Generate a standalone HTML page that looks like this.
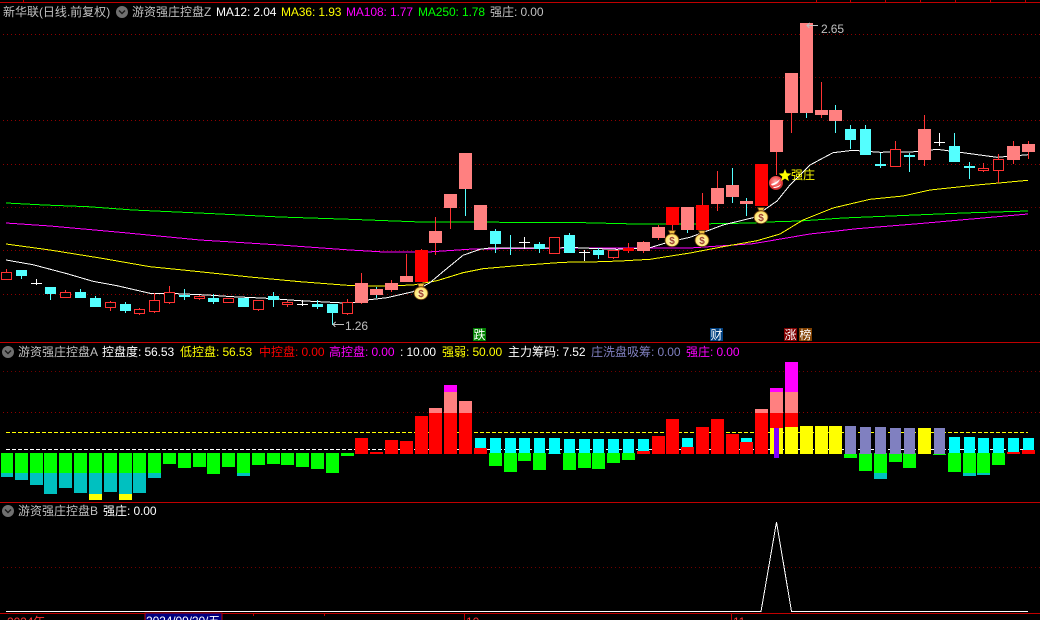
<!DOCTYPE html>
<html lang="zh"><head><meta charset="utf-8"><title>游资强庄控盘</title>
<style>
html,body{margin:0;padding:0;background:#000;width:1040px;height:620px;overflow:hidden}
#r{position:relative;width:1040px;height:620px;overflow:hidden;background:#000}
svg{position:absolute;left:0;top:0}
.t{position:absolute;white-space:nowrap;font:12px/14px "Liberation Sans","WenQuanYi Zen Hei",sans-serif;letter-spacing:-.1px;color:#c0c0c0}
.t b{font:12px/14px "WenQuanYi Zen Hei","Noto Sans CJK SC",sans-serif;letter-spacing:0;display:inline-block;vertical-align:top}
.bd{position:absolute;width:13px;height:13px;color:#fff;text-align:center;font:12px/13px "WenQuanYi Zen Hei","Noto Sans CJK SC",sans-serif}
</style></head><body><div id="r">
<svg width="1040" height="620" viewBox="0 0 1040 620">
<defs>
<radialGradient id="bg" cx=".5" cy=".55" r=".55"><stop offset="0" stop-color="#fff8c8"/><stop offset=".75" stop-color="#ffe878"/><stop offset="1" stop-color="#e8b030"/></radialGradient>
<radialGradient id="ball" cx=".45" cy=".4" r=".65"><stop offset="0" stop-color="#ffa8a8"/><stop offset=".6" stop-color="#f04848"/><stop offset="1" stop-color="#b02020"/></radialGradient>
<g id="bag"><path d="M-3.500-8.500h7l-1.500 3.500h-4z" fill="#f0c040" stroke="#6a3a10" stroke-width=".8"/><ellipse cx="0" cy="1.200" rx="7" ry="6.500" fill="url(#bg)" stroke="#5a3010" stroke-width=".8"/><text x="0" y="4.800" text-anchor="middle" font-family="Liberation Sans,sans-serif" font-weight="bold" font-size="10" fill="#a04030">$</text></g>
</defs>
<!-- grid -->
<g stroke="#900000" stroke-dasharray="1 3" shape-rendering="crispEdges">
<path d="M3 34.500H1040M3 120.500H1040M3 164.500H1040M3 250.500H1040M3 294.500H1040"/>
<path stroke="#700000" d="M3 77.500H1040M3 207.500H1040M3 371.500H1040M3 567.500H1040"/>
<path stroke="#900000" d="M3 412.500H1040"/>
</g>
<!-- frame -->
<g stroke="#c00000" shape-rendering="crispEdges">
<path d="M0 2.500H1040M0 342.500H1040M0 502.500H1040M0 613.500H1040"/>
<path d="M23.500 0V2M816.500 0V2M850.500 0V2M885.500 0V2M920.500 0V2M955.500 0V2M990.500 0V2M1025.500 0V2M253.500 614V616M324.500 614V616M464.500 614V620M731.500 614V620"/>
</g>
<!-- MA lines -->
<g fill="none" stroke-width="1" shape-rendering="crispEdges">
<polyline stroke="#00ff00" points="6,203 44,205 88,206.700 133,210 177,212 220,214 280,217 350,219.300 421,222 576,222.500 636,224 697,224 753,223 767,222 800,221 843,218 903,215.500 963,213 1028,211"/>
<polyline stroke="#ff00ff" points="6,223 50,226 117,232 200,240 280,245 350,250 384,252 428,252 473,249 577,248 690,248 753,243.700 810,234 857,228.700 923,223.300 1028,214"/>
<polyline stroke="#ffff00" points="6,244 50,250 100,258 150,266.700 183,270 250,277 300,281.700 350,285.500 383,286 413,285 437,280.700 463,272.700 483,268.700 517,265.700 563,262.300 590,262 620,261 650,259.300 690,253 723,246.700 757,240.700 780,234 803,220 833,208 870,199.300 903,196 930,190 977,185 1028,180.300"/>
<polyline stroke="#ffffff" points="6,260 33,264.700 67,273.700 93,281.300 117,285.700 150,293.300 177,293.700 207,295 233,296.700 267,298.300 300,300.700 350,303.300 367,300 387,297.700 413,291.700 430,282.700 443,271.700 463,255.300 480,249.300 490,248 577,247.700 590,248.300 617,249.300 650,247.700 670,241.700 690,237.300 723,225 753,217.700 777,201 790,185 810,165 833,152.700 853,150.300 880,152.300 917,151.700 937,149.300 963,152.700 997,157.300 1028,154.700"/>
</g>
<g shape-rendering="crispEdges">
<!-- red wicks -->
<path fill="none" stroke="#ff3232" d="M6.500 269V272M65.500 290V292M65.500 297V298M110.500 301V302M110.500 307V311M139.500 308V309M139.500 314V315M154.500 293V300M154.500 312V313M169.500 286V292M169.500 303V304M199.500 295V296M199.500 299V300M258.500 310V311M287.500 301V302M287.500 305V307M347.500 299V302M347.500 314V315M361.500 273V304M391.500 280V292M406.500 254V282M421.500 249V255M435.500 217V255M450.500 208V229M613.500 258V259M628.500 243V253M643.500 241V253M658.500 225V240M672.500 225V231M702.500 193V205M717.500 171V211M776.500 152V175M791.500 113V133M821.500 82V118M895.500 141V149M924.500 115V166M983.500 163V168M983.500 171V172M998.500 154V159M998.500 171V183M1013.500 141V164M1028.500 141V159"/>
<!-- cyan wicks -->
<path fill="none" stroke="#54ffff" d="M21.500 276V279M50.500 294V300M80.500 289V292M95.500 296V298M125.500 302V304M125.500 311V313M184.500 289V300M213.500 294V304M273.500 292V307M317.500 300V309M332.500 313V325M376.500 287V298M465.500 189V216M495.500 229V253M510.500 235V255M539.500 242V253M569.500 233V235M598.500 248V259M687.500 230V233M732.500 168V203M746.500 198V216M806.500 113V118M835.500 105V133M850.500 125V149M865.500 125V129M880.500 153V168M909.500 153V172M954.500 133V146M969.500 162V179"/>
<!-- white doji -->
<path fill="none" stroke="#fff" d="M31 283.500H42M36.500 279V285M297 304.500H308M302.500 300V306M519 242.500H530M524.500 237V249M579 252.500H590M584.500 250V261M934 142.500H945M939.500 133V146"/>
<!-- hollow -->
<path fill="#000" stroke="#ff3232" d="M1.500 272.500h10v7h-10zM60.500 292.500h10v5h-10zM105.500 302.500h10v5h-10zM134.500 309.500h10v4h-10zM149.500 300.500h10v11h-10zM164.500 292.500h10v10h-10zM194.500 296.500h10v2h-10zM223.500 298.500h10v4h-10zM253.500 300.500h10v9h-10zM282.500 302.500h10v2h-10zM342.500 302.500h10v11h-10zM549.500 237.500h10v16h-10zM608.500 250.500h10v7h-10zM890.500 149.500h10v17h-10zM978.500 168.500h10v2h-10zM993.500 159.500h10v11h-10z"/>
<!-- cyan bodies -->
<g fill="#54ffff">
<rect x="16" y="270" width="11" height="6"/><rect x="45" y="287" width="11" height="7"/><rect x="75" y="292" width="11" height="6"/><rect x="90" y="298" width="11" height="9"/><rect x="120" y="304" width="11" height="7"/><rect x="179" y="295" width="11" height="2"/><rect x="208" y="298" width="11" height="4"/><rect x="238" y="298" width="11" height="9"/><rect x="268" y="296" width="11" height="4"/><rect x="312" y="304" width="11" height="3"/><rect x="327" y="304" width="11" height="9"/><rect x="490" y="231" width="11" height="13"/><rect x="534" y="244" width="11" height="5"/><rect x="564" y="235" width="11" height="18"/><rect x="593" y="250" width="11" height="5"/><rect x="845" y="129" width="11" height="11"/><rect x="860" y="129" width="11" height="26"/><rect x="875" y="164" width="11" height="2"/><rect x="904" y="155" width="11" height="2"/><rect x="949" y="146" width="11" height="16"/><rect x="964" y="166" width="11" height="2"/>
</g>
<!-- pink bodies -->
<g fill="#ff8080">
<rect x="355" y="283" width="13" height="20"/><rect x="370" y="289" width="13" height="6"/><rect x="385" y="283" width="13" height="7"/><rect x="400" y="276" width="13" height="6"/><rect x="429" y="231" width="13" height="12"/><rect x="444" y="194" width="13" height="14"/><rect x="459" y="153" width="13" height="36"/><rect x="474" y="205" width="13" height="25"/><rect x="637" y="242" width="13" height="9"/><rect x="652" y="227" width="13" height="11"/><rect x="681" y="207" width="13" height="23"/><rect x="711" y="188" width="13" height="16"/><rect x="726" y="185" width="13" height="12"/><rect x="740" y="201" width="13" height="3"/><rect x="770" y="120" width="13" height="32"/><rect x="785" y="73" width="13" height="40"/><rect x="800" y="23" width="13" height="90"/><rect x="815" y="110" width="13" height="5"/><rect x="829" y="110" width="13" height="11"/><rect x="918" y="129" width="13" height="31"/><rect x="1007" y="146" width="13" height="14"/><rect x="1022" y="144" width="13" height="8"/>
</g>
<!-- red bodies -->
<g fill="#ff0000">
<rect x="415" y="250" width="13" height="32"/><rect x="623" y="248" width="11" height="3"/><rect x="666" y="207" width="13" height="18"/><rect x="696" y="205" width="13" height="25"/><rect x="755" y="164" width="13" height="42"/>
</g>
</g>
<!-- bags / ball / star -->
<use href="#bag" x="421" y="292"/><use href="#bag" x="672" y="239"/><use href="#bag" x="702" y="239"/><use href="#bag" x="761" y="216"/>
<circle cx="776" cy="183" r="7" fill="url(#ball)"/><path d="M771 184c3-1 6-2 9-5-1 3-4 6-8 6.500zM773 187c3 0 6-1 8-3-1 3-4 4-7 4z" fill="#fff"/>
<path d="M785 169l1.700 4.300 4.600.3-3.600 3 1.200 4.500-3.900-2.500-3.900 2.500 1.200-4.500-3.600-3 4.600-.3z" fill="#ffff00"/>
<!-- arrows -->
<path d="M818 25.500H807M809.500 23l-2.500 2.500 2.500 2.500M344 324.500H333M335.500 322l-2.500 2.500 2.500 2.500" fill="none" stroke="#c0c0c0" shape-rendering="crispEdges"/>
<!-- dashed levels -->
<g fill="none" shape-rendering="crispEdges" stroke-dasharray="4 2">
<path stroke="#ffff00" d="M6 432.500H1028"/><path stroke="#ffffff" d="M6 449.500H1028"/>
</g>
<!-- bars -->
<g shape-rendering="crispEdges">
<g fill="#00ff00">
<rect x="1" y="453" width="12" height="20"/><rect x="15" y="453" width="13" height="20"/><rect x="30" y="453" width="13" height="20"/><rect x="44" y="453" width="13" height="20"/><rect x="59" y="453" width="13" height="20"/><rect x="74" y="453" width="13" height="20"/><rect x="89" y="453" width="13" height="20"/><rect x="104" y="453" width="13" height="20"/><rect x="119" y="453" width="13" height="20"/><rect x="133" y="453" width="13" height="20"/><rect x="148" y="453" width="13" height="20"/><rect x="163" y="453" width="13" height="11"/><rect x="178" y="453" width="13" height="15"/><rect x="193" y="453" width="13" height="14"/><rect x="207" y="453" width="13" height="21"/><rect x="222" y="453" width="13" height="14"/><rect x="237" y="453" width="13" height="20"/><rect x="252" y="453" width="13" height="12"/><rect x="267" y="453" width="13" height="11"/><rect x="281" y="453" width="13" height="12"/><rect x="296" y="453" width="13" height="14"/><rect x="311" y="453" width="13" height="16"/><rect x="326" y="453" width="13" height="20"/><rect x="341" y="453" width="13" height="3"/>
<rect x="489" y="453" width="13" height="13"/><rect x="504" y="453" width="13" height="19"/><rect x="518" y="453" width="13" height="8"/><rect x="533" y="453" width="13" height="17"/><rect x="548" y="453" width="13" height="1"/><rect x="563" y="453" width="13" height="17"/><rect x="578" y="453" width="13" height="15"/><rect x="592" y="453" width="13" height="16"/><rect x="607" y="453" width="13" height="10"/><rect x="622" y="453" width="13" height="7"/>
<rect x="844" y="454" width="13" height="4"/><rect x="859" y="453" width="13" height="18"/><rect x="874" y="453" width="13" height="20"/><rect x="889" y="453" width="13" height="9"/><rect x="903" y="453" width="13" height="15"/><rect x="933" y="454" width="13" height="1"/><rect x="948" y="453" width="13" height="19"/><rect x="963" y="453" width="13" height="20"/><rect x="977" y="453" width="13" height="20"/><rect x="992" y="453" width="13" height="12"/>
</g>
<g fill="#00c0c0">
<rect x="1" y="473" width="12" height="4"/><rect x="15" y="473" width="13" height="7"/><rect x="30" y="473" width="13" height="12"/><rect x="44" y="473" width="13" height="21"/><rect x="59" y="473" width="13" height="15"/><rect x="74" y="473" width="13" height="20"/><rect x="89" y="473" width="13" height="21"/><rect x="104" y="473" width="13" height="19"/><rect x="119" y="473" width="13" height="21"/><rect x="133" y="473" width="13" height="20"/><rect x="148" y="473" width="13" height="5"/><rect x="237" y="473" width="13" height="3"/><rect x="874" y="473" width="13" height="6"/><rect x="963" y="473" width="13" height="3"/><rect x="977" y="473" width="13" height="2"/>
</g>
<g fill="#ffff00">
<rect x="89" y="494" width="13" height="6"/><rect x="119" y="494" width="13" height="6"/>
<rect x="770" y="428" width="13" height="26"/><rect x="785" y="427" width="13" height="27"/><rect x="800" y="426" width="13" height="28"/><rect x="815" y="426" width="13" height="28"/><rect x="829" y="426" width="13" height="28"/><rect x="918" y="428" width="13" height="26"/>
</g>
<g fill="#00ffff">
<rect x="475" y="438" width="11" height="10"/><rect x="490" y="438" width="11" height="15"/><rect x="505" y="438" width="11" height="15"/><rect x="519" y="438" width="11" height="15"/><rect x="534" y="438" width="11" height="15"/><rect x="549" y="438" width="11" height="16"/><rect x="564" y="439" width="11" height="14"/><rect x="579" y="439" width="11" height="14"/><rect x="593" y="439" width="11" height="14"/><rect x="608" y="439" width="11" height="14"/><rect x="623" y="439" width="11" height="14"/><rect x="638" y="439" width="11" height="12"/><rect x="682" y="438" width="11" height="9"/><rect x="741" y="438" width="11" height="4"/>
<rect x="949" y="437" width="11" height="16"/><rect x="964" y="437" width="11" height="16"/><rect x="978" y="438" width="11" height="15"/><rect x="993" y="438" width="11" height="15"/><rect x="1008" y="438" width="11" height="14"/><rect x="1023" y="438" width="11" height="12"/>
</g>
<g fill="#ff0000">
<rect x="355" y="438" width="13" height="16"/><rect x="370" y="452" width="13" height="2"/><rect x="385" y="440" width="13" height="14"/><rect x="400" y="441" width="13" height="13"/><rect x="415" y="416" width="13" height="38"/><rect x="429" y="413" width="13" height="41"/><rect x="444" y="413" width="13" height="41"/><rect x="459" y="413" width="13" height="41"/><rect x="474" y="448" width="13" height="6"/><rect x="637" y="451" width="13" height="3"/><rect x="652" y="436" width="13" height="18"/><rect x="666" y="419" width="13" height="35"/><rect x="681" y="447" width="13" height="7"/><rect x="696" y="427" width="13" height="27"/><rect x="711" y="419" width="13" height="35"/><rect x="726" y="434" width="13" height="20"/><rect x="740" y="442" width="13" height="12"/><rect x="755" y="413" width="13" height="41"/><rect x="770" y="413" width="13" height="15"/><rect x="785" y="413" width="13" height="14"/><rect x="1007" y="452" width="13" height="2"/><rect x="1022" y="450" width="13" height="4"/>
</g>
<g fill="#ff8080">
<rect x="429" y="408" width="13" height="5"/><rect x="444" y="392" width="13" height="21"/><rect x="459" y="401" width="13" height="12"/><rect x="755" y="409" width="13" height="4"/><rect x="770" y="392" width="13" height="21"/><rect x="785" y="392" width="13" height="21"/>
</g>
<g fill="#ff00ff">
<rect x="444" y="385" width="13" height="7"/><rect x="770" y="388" width="13" height="4"/><rect x="785" y="362" width="13" height="30"/>
</g>
<rect x="774" y="428" width="5" height="30" fill="#8000ff"/>
<g fill="#8080c0">
<rect x="845" y="426" width="11" height="28"/><rect x="860" y="427" width="11" height="27"/><rect x="875" y="427" width="11" height="27"/><rect x="890" y="428" width="11" height="26"/><rect x="904" y="428" width="11" height="26"/><rect x="934" y="428" width="11" height="26"/>
</g>
</g>
<!-- panel 3 -->
<path d="M6 611.500H761L776.500 522L791.500 611.500H1028" fill="none" stroke="#fff" stroke-width="1" shape-rendering="crispEdges"/>
<rect x="145" y="613" width="77" height="8" fill="#000080" stroke="#c00000"/>
<!-- icons -->
<g fill="#707070"><circle cx="122" cy="12" r="6"/><circle cx="8" cy="352" r="6"/><circle cx="8" cy="511" r="6"/></g>
<path d="M119 10.500l3 3 3-3M5 350.500l3 3 3-3M5 509.500l3 3 3-3" fill="none" stroke="#1a1a1a" stroke-width="1.400"/>
</svg>

<!-- header -->
<span class="t" style="left:3px;top:5px"><b>新华联</b>(<b>日线</b>.<b>前复权</b>)</span>
<span class="t" style="left:132px;top:5px"><b>游资强庄控盘</b>Z</span>
<span class="t" style="left:216px;top:5px;color:#fff">MA12: 2.04</span>
<span class="t" style="left:281px;top:5px;color:#ff0">MA36: 1.93</span>
<span class="t" style="left:346px;top:5px;color:#f0f">MA108: 1.77</span>
<span class="t" style="left:418px;top:5px;color:#0f0">MA250: 1.78</span>
<span class="t" style="left:490px;top:5px"><b>强庄</b>: 0.00</span>
<!-- chart labels -->
<span class="t" style="left:821px;top:22px">2.65</span>
<span class="t" style="left:345px;top:319px">1.26</span>
<span class="t" style="left:791px;top:168px;color:#ff0"><b>强庄</b></span>
<div class="bd" style="left:473px;top:328px;background:#008000">跌</div>
<div class="bd" style="left:710px;top:328px;background:#004080">财</div>
<div class="bd" style="left:784px;top:328px;background:#800000">涨</div>
<div class="bd" style="left:799px;top:328px;background:#804000">榜</div>
<!-- panel 2 -->
<span class="t" style="left:18px;top:345px"><b>游资强庄控盘</b>A</span>
<span class="t" style="left:102px;top:345px;color:#fff"><b>控盘度</b>: 56.53</span>
<span class="t" style="left:180px;top:345px;color:#ff0"><b>低控盘</b>: 56.53</span>
<span class="t" style="left:259px;top:345px;color:#f00"><b>中控盘</b>: 0.00</span>
<span class="t" style="left:329px;top:345px;color:#f0f"><b>高控盘</b>: 0.00</span>
<span class="t" style="left:400px;top:345px;color:#fff">: 10.00</span>
<span class="t" style="left:442px;top:345px;color:#ff0"><b>强弱</b>: 50.00</span>
<span class="t" style="left:508px;top:345px;color:#fff"><b>主力筹码</b>: 7.52</span>
<span class="t" style="left:591px;top:345px;color:#8080c0"><b>庄洗盘吸筹</b>: 0.00</span>
<span class="t" style="left:686px;top:345px;color:#f0f"><b>强庄</b>: 0.00</span>
<!-- panel 3 -->
<span class="t" style="left:18px;top:504px"><b>游资强庄控盘</b>B</span>
<span class="t" style="left:103px;top:504px;color:#fff"><b>强庄</b>: 0.00</span>
<!-- axis -->
<span class="t" style="left:7px;top:615px;color:#ff3232">2024<b>年</b></span>
<span class="t" style="left:146px;top:614px;color:#fff">2024/09/20/<b>五</b></span>
<span class="t" style="left:466px;top:615px;color:#ff3232">10</span>
<span class="t" style="left:733px;top:615px;color:#ff3232">11</span>
</div></body></html>
